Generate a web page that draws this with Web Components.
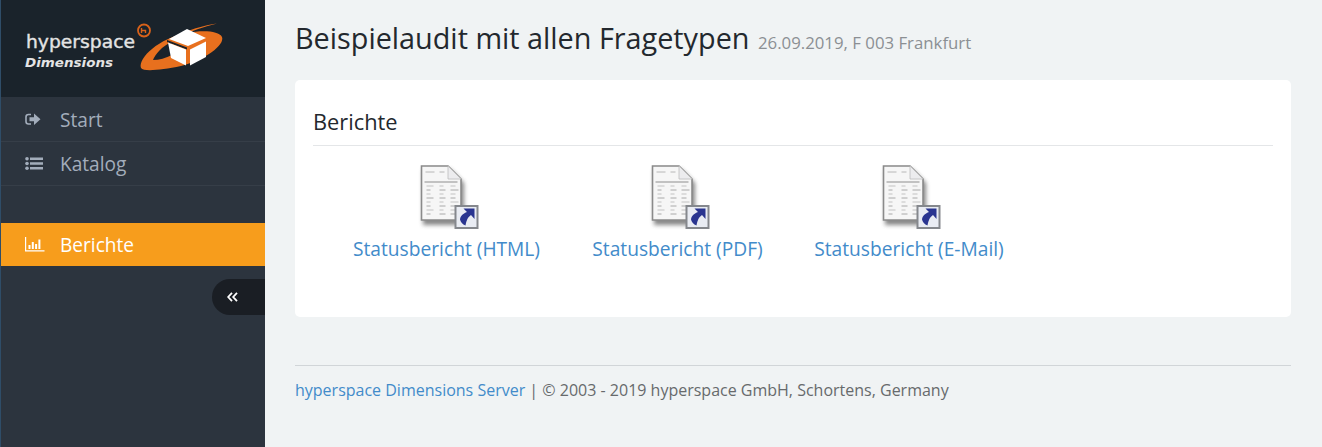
<!DOCTYPE html>
<html lang="de">
<head>
<meta charset="utf-8">
<title>Berichte</title>
<style>
    html, body { margin: 0; height: 100%; }
    body { font-family: "Open Sans", sans-serif; background: #f0f3f4; overflow: hidden; }
    app-shell { height: 447px; }
</style>
</head>
<body>
<app-shell>
    <side-bar slot="side">
        <nav-item icon="start">Start</nav-item>
        <nav-item icon="list">Katalog</nav-item>
        <nav-item icon="chart" active>Berichte</nav-item>
    </side-bar>
    <page-title sub="26.09.2019, F 003 Frankfurt">Beispielaudit mit allen Fragetypen</page-title>
    <report-panel heading="Berichte">
        <report-link style="width:187px;margin-left:40px">Statusbericht (HTML)</report-link>
        <report-link style="width:171px;margin-left:52px">Statusbericht (PDF)</report-link>
        <report-link style="width:190px;margin-left:51px">Statusbericht (E-Mail)</report-link>
    </report-panel>
    <page-footer></page-footer>
</app-shell>

<script>
class AppShell extends HTMLElement {
    constructor() {
        super();
        this.attachShadow({ mode: 'open' });
        this.shadowRoot.innerHTML = `
            <style>
                :host { display: flex; width: 100%; }
                .side { flex: 0 0 265px; display: flex; }
                .main { flex: 1; min-width: 0; padding: 0 31px 0 30px; }
            </style>
            <div class="side"><slot name="side"></slot></div>
            <div class="main"><slot></slot></div>
        `;
    }
}

class SideBar extends HTMLElement {
    constructor() {
        super();
        this.attachShadow({ mode: 'open' });
        this.shadowRoot.innerHTML = `
            <style>
                :host {
                    display: block;
                    width: 265px;
                    box-sizing: border-box;
                    background: #2c343e;
                    border-left: 1px solid #2f4d68;
                }
                .logo {
                    height: 97px;
                    background: #1a232b;
                    display: flex;
                    align-items: flex-start;
                }
                .logo svg { display: block; }
                .items { display: flex; flex-direction: column; }
                ::slotted(nav-item[active]) { margin-top: 37px; }
                .toggle-row { display: flex; justify-content: flex-end; margin-top: 13px; }
                .toggle {
                    width: 53px;
                    height: 36px;
                    background: #1a1e24;
                    border-radius: 18px 0 0 18px;
                    display: flex;
                    align-items: center;
                    padding-left: 15px;
                    box-sizing: border-box;
                }
            </style>
            <div class="logo">
                <svg width="264" height="97" viewBox="0 0 264 97">
                    <text x="25" y="47.500" font-family="'DejaVu Sans', sans-serif" font-size="18.5" fill="#e4e4e4" stroke="#e4e4e4" stroke-width=".4" textLength="109" lengthAdjust="spacingAndGlyphs">hyperspace</text>
                    <text x="24" y="66.500" font-family="'DejaVu Sans', sans-serif" font-size="12.500" font-weight="700" font-style="italic" fill="#e4e4e4" textLength="88" lengthAdjust="spacingAndGlyphs">Dimensions</text>
                    <circle cx="143" cy="30.5" r="6" fill="none" stroke="#d9621a" stroke-width="1.8"/>
                    <path d="M140.500 33V28M140.500 30.500h4v2.500" fill="none" stroke="#d9621a" stroke-width="1.4"/>
                    <path d="M140 68C137 58 158 38 186 33C202 30 218 31 221 37C224 45 204 60 180 66C160 70 143 72 140 68Z" fill="#e8701e"/>
                    <path d="M152 60C154 54 162 46 170 42L171 55C165 58 158 60 152 60Z" fill="#1a232b"/>
                    <path d="M172 38C186 30 204 25 216 23.500C202 27 190 31 180 36Z" fill="#e8701e"/>
                    <path d="M166 40L186 47.500V49.500L166 42Z" fill="#1a232b"/>
                    <path d="M168 39L186 29L205 38L187 46Z" fill="#fff"/>
                    <path d="M167 42.500L185 49.500V65.500L170 58Z" fill="#fff"/>
                    <path d="M189 49.500L205 41.500V57L189 65.500Z" fill="#fff"/>
                </svg>
            </div>
            <div class="items"><slot></slot></div>
            <div class="toggle-row">
                <div class="toggle">
                    <svg width="11" height="10" viewBox="0 0 11 10">
                        <path d="M5 .8L1.200 5L5 9.200M10 .8L6.200 5L10 9.200" fill="none" stroke="#fff" stroke-width="1.800"/>
                    </svg>
                </div>
            </div>
        `;
    }
}

const NAV_ICONS = {
    start: '<path d="M6 2.500H3.500Q1 2.500 1 5V9.500Q1 12 3.500 12H6" fill="none" stroke="currentColor" stroke-width="1.600"/><path d="M4.500 5.200H9V1.500L15.500 7.200L9 12.900V9.200H4.500Z" fill="currentColor"/>',
    list: '<circle cx="2" cy="2.800" r="1.800" fill="currentColor"/><circle cx="2" cy="7.500" r="1.800" fill="currentColor"/><circle cx="2" cy="12.200" r="1.800" fill="currentColor"/><path d="M5 1.500H18V4H5ZM5 6.200H18V8.700H5ZM5 11H18V13.500H5Z" fill="currentColor"/>',
    chart: '<path d="M.6 0V13.800H19.500" fill="none" stroke="currentColor" stroke-width="1.200"/><path d="M3.500 8H5.500V12H3.500ZM6.800 5H8.800V12H6.800ZM10.100 7H12.100V12H10.100ZM13.400 2.500H15.400V12H13.400Z" fill="currentColor"/>'
};

class NavItem extends HTMLElement {
    constructor() {
        super();
        this.attachShadow({ mode: 'open' });
        this.shadowRoot.innerHTML = `
            <style>
                :host {
                    display: block;
                    color: #a3adbb;
                    font-size: 19.100px;
                }
                :host([active]) { color: #fff; background: #f79d1c; }
                .row {
                    height: 44px;
                    display: flex;
                    align-items: center;
                    box-sizing: border-box;
                    padding-left: 24px;
                    border-bottom: 1px solid #363e48;
                }
                :host(:first-child) .row { height: 45px; padding-top: 1px; }
                :host([active]) .row { height: 43px; border-bottom: 0; }
                .icon { width: 35px; display: flex; }
                svg { display: block; }
            </style>
            <div class="row">
                <span class="icon"><svg width="20" height="15" viewBox="0 0 20 15">${NAV_ICONS[this.getAttribute('icon')]}</svg></span>
                <slot></slot>
            </div>
        `;
    }
}

class PageTitle extends HTMLElement {
    constructor() {
        super();
        this.attachShadow({ mode: 'open' });
        this.shadowRoot.innerHTML = `
            <style>
                :host { display: block; height: 80px; box-sizing: border-box; padding-top: 18px; color: #23282e; }
                h1 { margin: 0; font-size: 28.800px; font-weight: 400; line-height: 40px; white-space: nowrap; }
                small { font-size: 16.800px; color: #8b8f93; margin-left: 1px; }
            </style>
            <h1><slot></slot> <small>${this.getAttribute('sub')}</small></h1>
        `;
    }
}

class ReportPanel extends HTMLElement {
    constructor() {
        super();
        this.attachShadow({ mode: 'open' });
        this.shadowRoot.innerHTML = `
            <style>
                :host {
                    display: block;
                    height: 237px;
                    box-sizing: border-box;
                    background: #fff;
                    border-radius: 5px;
                    padding: 27px 18px 0;
                }
                h2 {
                    margin: 0;
                    height: 39px;
                    box-sizing: border-box;
                    font-size: 21.800px;
                    font-weight: 400;
                    line-height: 30px;
                    color: #23282e;
                    border-bottom: 1px solid #e4e6e8;
                }
                .links { display: flex; padding-top: 19px; }
            </style>
            <h2>${this.getAttribute('heading')}</h2>
            <div class="links"><slot></slot></div>
        `;
    }
}

// tiny grey cells for the thumbnail on the report icon
function reportIconRows() {
    let out = '';
    for (let i = 0; i < 8; i++) {
        const y = 21 + i * 4;
        const grey = i % 2 ? '#a0a0a0' : '#bcbcbc';
        out += `<path d="M6 ${y}h${i % 3 ? 4 : 7}M19 ${y}h${i % 2 ? 6 : 4}M30 ${y}h${i % 3 === 1 ? 8 : 5}" stroke="${grey}" stroke-width=".9"/>`;
    }
    return out;
}

class ReportLink extends HTMLElement {
    constructor() {
        super();
        this.attachShadow({ mode: 'open' });
        this.shadowRoot.innerHTML = `
            <style>
                :host {
                    display: flex;
                    flex: none;
                    flex-direction: column;
                    align-items: center;
                    color: #428bca;
                    font-size: 19.200px;
                }
                svg { display: block; margin-bottom: 5px; }
                a { color: inherit; text-decoration: none; line-height: 25px; white-space: nowrap; }
            </style>
            <svg width="64" height="66" viewBox="0 0 64 66">
                <defs>
                    <filter id="soft" x="-10%" y="-10%" width="120%" height="120%"><feGaussianBlur stdDeviation=".6"/></filter>
                    <filter id="shade" x="-20%" y="-20%" width="140%" height="140%"><feGaussianBlur stdDeviation="2"/></filter>
                </defs>
                <path d="M6 1H33L47 15V57H6Z" transform="translate(2 3)" fill="#555" opacity=".7" filter="url(#shade)"/>
                <g filter="url(#soft)" transform="translate(5.500 0)">
                    <path d="M1 1H27.500L40.500 14V55H1Z" fill="#f6f6f6" stroke="#8a8a8a" stroke-width="1.600"/>
                    <path d="M27.500 1L40.500 14H27.500Z" fill="#ecECEE" stroke="#bcbcbc" stroke-width=".8"/>
                    <path d="M5 7h9M19 7h5" stroke="#b0b0b0" stroke-width=".9"/>
                    <path d="M4 17H37" stroke="#8e8e8e" stroke-width="1.100"/>
                    ${reportIconRows()}
                </g>
                <g transform="translate(39.500 40)" filter="url(#soft)">
                    <rect x="1" y="1" width="22" height="22" fill="#e9ecf3" stroke="#85888d" stroke-width="2"/>
                    <path d="M9 3.500H20V14L16.500 10C13 12.500 12 15.500 11 20.500C8 19.500 6 17 5.500 14.500C6 10.500 9 8.500 12.500 7Z" fill="#2b3590"/>
                </g>
            </svg>
            <a href="#"><slot></slot></a>
        `;
    }
}

class PageFooter extends HTMLElement {
    constructor() {
        super();
        this.attachShadow({ mode: 'open' });
        this.shadowRoot.innerHTML = `
            <style>
                :host {
                    display: block;
                    margin-top: 48px;
                    border-top: 1px solid #d1d5d8;
                    padding-top: 12px;
                    font-size: 16px;
                    line-height: 24px;
                    color: #676a6c;
                    white-space: nowrap;
                }
                a { color: #428bca; text-decoration: none; }
            </style>
            <a href="#">hyperspace Dimensions Server</a> | © 2003 - 2019 hyperspace GmbH, Schortens, Germany
        `;
    }
}

customElements.define('app-shell', AppShell);
customElements.define('side-bar', SideBar);
customElements.define('nav-item', NavItem);
customElements.define('page-title', PageTitle);
customElements.define('report-panel', ReportPanel);
customElements.define('report-link', ReportLink);
customElements.define('page-footer', PageFooter);
</script>
</body>
</html>
